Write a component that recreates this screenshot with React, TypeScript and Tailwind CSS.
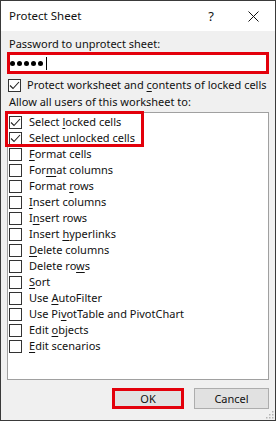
import React from 'react';

type Item = { pre: string; key: string; post: string; checked?: boolean };

const items: Item[] = [
  { pre: 'Select ', key: 'l', post: 'ocked cells', checked: true },
  { pre: 'Select ', key: 'u', post: 'nlocked cells', checked: true },
  { pre: '', key: 'F', post: 'ormat cells' },
  { pre: 'For', key: 'm', post: 'at columns' },
  { pre: 'Format ', key: 'r', post: 'ows' },
  { pre: '', key: 'I', post: 'nsert columns' },
  { pre: 'I', key: 'n', post: 'sert rows' },
  { pre: 'Insert ', key: 'h', post: 'yperlinks' },
  { pre: '', key: 'D', post: 'elete columns' },
  { pre: 'Delete ro', key: 'w', post: 's' },
  { pre: '', key: 'S', post: 'ort' },
  { pre: 'Use ', key: 'A', post: 'utoFilter' },
  { pre: 'Use Pi', key: 'v', post: 'otTable and PivotChart' },
  { pre: 'Edit ', key: 'o', post: 'bjects' },
  { pre: '', key: 'E', post: 'dit scenarios' },
];

function CheckBox({ checked }: { checked?: boolean }) {
  return (
    <span className="flex h-[13px] w-[13px] flex-none items-center justify-center border border-[#333] bg-white">
      {checked && (
        <svg width="11" height="11" viewBox="0 0 11 11" fill="none">
          <path d="M1 5.5 L4 8.5 L10 2" stroke="#222" strokeWidth="1.1" />
        </svg>
      )}
    </span>
  );
}

function Label({ pre, k, post }: { pre: string; k: string; post: string }) {
  return (
    <span className="whitespace-nowrap">
      {pre}
      <u className="underline-offset-2">{k}</u>
      {post}
    </span>
  );
}

export default function App() {
  return (
    <div
      className="flex h-[421px] w-[276px] flex-col border border-[#3a3a3a] text-[11px] leading-[16px] text-[#111]"
      style={{ fontFamily: '"Noto Sans", "Open Sans", sans-serif' }}
    >
      {/* title bar */}
      <div className="flex h-[30px] flex-none items-center bg-white pl-2 pr-[16px]">
        <span className="text-[11.5px]">Protect Sheet</span>
        <span className="ml-auto mr-[34px] text-[13px]">?</span>
        <svg width="11" height="11" viewBox="0 0 11 11">
          <path d="M0.5 0.5 L10.5 10.5 M10.5 0.5 L0.5 10.5" stroke="#111" strokeWidth="1" />
        </svg>
      </div>

      <div className="flex flex-1 flex-col bg-[#f0f0f0] px-[6px] pt-[5px]">
        <div className="pl-[2px]">Password to unprotect sheet:</div>

        <div className="flex h-[22px] items-center gap-[2px] border-[3px] border-[#e3000b] bg-white">
          {[0, 1, 2, 3, 4].map((i) => (
            <span key={i} className="h-[5px] w-[5px] rounded-full bg-black" />
          ))}
          <span className="ml-[1px] h-[13px] w-[1px] bg-black" />
        </div>

        <div className="mt-[3px] flex h-[16px] items-center gap-[6px] pl-[1px]">
          <CheckBox checked />
          <Label pre="Protect worksheet and " k="c" post="ontents of locked cells" />
        </div>

        <div className="pl-[2px] pt-[1px]">Allow all users of this worksheet to:</div>

        <div className="relative mt-[2px] h-[268px] border border-[#a0a0a0] bg-white pl-[1px] pt-[1px]">
          {items.map((it, i) => (
            <div key={i} className="flex h-[16px] items-center gap-[7px]">
              <CheckBox checked={it.checked} />
              <Label pre={it.pre} k={it.key} post={it.post} />
            </div>
          ))}
          <div className="absolute left-[-3px] top-[-2px] h-[36px] w-[139px] border-[3px] border-[#e3000b]" />
        </div>

        <div className="mt-[8px] flex justify-end gap-[10px]">
          <button className="flex h-[21px] w-[72px] items-center justify-center border-[3px] border-[#e3000b] bg-[#e1e1e1]">
            OK
          </button>
          <button className="flex h-[21px] w-[75px] items-center justify-center border border-[#adadad] bg-[#e1e1e1]">
            Cancel
          </button>
        </div>

        <div className="mt-auto flex justify-end pb-[1px]">
          <svg width="8" height="8" viewBox="0 0 8 8" className="mr-[-5px]">
            <rect x="6" y="0" width="1.5" height="1.5" fill="#b5b5b5" />
            <rect x="3" y="3" width="1.5" height="1.5" fill="#b5b5b5" />
            <rect x="6" y="3" width="1.5" height="1.5" fill="#b5b5b5" />
            <rect x="0" y="6" width="1.5" height="1.5" fill="#b5b5b5" />
            <rect x="3" y="6" width="1.5" height="1.5" fill="#b5b5b5" />
            <rect x="6" y="6" width="1.5" height="1.5" fill="#b5b5b5" />
          </svg>
        </div>
      </div>
    </div>
  );
}
